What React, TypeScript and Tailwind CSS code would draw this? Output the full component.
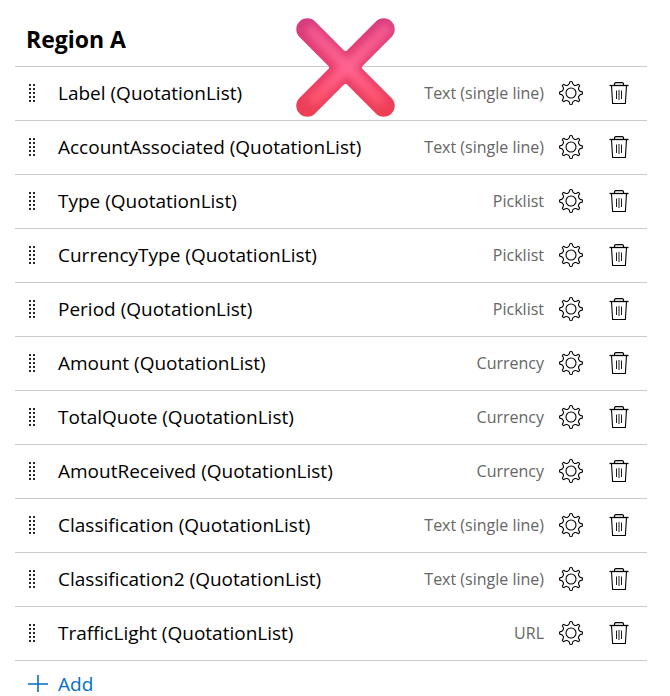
import React, { useState } from 'react';

interface Field {
  name: string;
  type: string;
}

const initialFields: Field[] = [
  { name: 'Label (QuotationList)', type: 'Text (single line)' },
  { name: 'AccountAssociated (QuotationList)', type: 'Text (single line)' },
  { name: 'Type (QuotationList)', type: 'Picklist' },
  { name: 'CurrencyType (QuotationList)', type: 'Picklist' },
  { name: 'Period (QuotationList)', type: 'Picklist' },
  { name: 'Amount (QuotationList)', type: 'Currency' },
  { name: 'TotalQuote (QuotationList)', type: 'Currency' },
  { name: 'AmoutReceived (QuotationList)', type: 'Currency' },
  { name: 'Classification (QuotationList)', type: 'Text (single line)' },
  { name: 'Classification2 (QuotationList)', type: 'Text (single line)' },
  { name: 'TrafficLight (QuotationList)', type: 'URL' },
];

// Eight rounded teeth around (12, 12)
const gearPath = (() => {
  const at = (radius: number, degrees: number) => {
    const a = (degrees * Math.PI) / 180;
    return `${(12 + radius * Math.sin(a)).toFixed(2)} ${(12 - radius * Math.cos(a)).toFixed(2)}`;
  };
  let d = `M${at(11.2, -6)}`;
  for (let i = 0; i < 8; i++) {
    const t = i * 45;
    d += `Q${at(11.8, t)} ${at(11.2, t + 6)}C${at(7.9, t + 9)} ${at(7.9, t + 36)} ${at(11.2, t + 39)}`;
  }
  return d + 'Z';
})();

function GearIcon() {
  return (
    <svg viewBox="0 0 24 24" className="size-6" fill="none" stroke="currentColor" strokeWidth="1.1" strokeLinejoin="round" aria-hidden="true">
      <path d={gearPath} />
      <circle cx="12" cy="12" r="5" />
    </svg>
  );
}

function TrashIcon() {
  return (
    <svg viewBox="0 0 24 24" className="size-6" fill="none" stroke="currentColor" aria-hidden="true">
      <path d="M2.500 4.500h19" strokeWidth="1.3" />
      <path d="M7.500 4.200V3q0-1.400 1.400-1.400h6.200q1.400 0 1.400 1.400v1.200" strokeWidth="1.2" />
      <path d="M4.500 4.500L5.600 22.500H18.400L19.500 4.500" strokeWidth="1.1" strokeLinejoin="round" />
      <path d="M9.500 9.500V18M12 9v10M14.500 9.500V18" strokeWidth="0.9" />
    </svg>
  );
}

function DragHandle() {
  return (
    <svg viewBox="0 0 6 18" className="h-[18px] w-1.5" fill="currentColor" aria-hidden="true">
      {[0, 4, 8, 12, 16].map(y => (
        <React.Fragment key={y}>
          <rect x="0" y={y} width="2" height="2" rx="0.8" />
          <rect x="4" y={y} width="2" height="2" rx="0.8" />
        </React.Fragment>
      ))}
    </svg>
  );
}

function CrossMark() {
  return (
    <svg
      viewBox="0 0 100 100"
      className="absolute left-[281px] top-[18px] size-[100px] pointer-events-none"
      role="img"
      aria-label="Incorrect"
    >
      <defs>
        <linearGradient id="cross-base" x1="0" y1="0" x2="0" y2="100" gradientUnits="userSpaceOnUse">
          <stop offset="0" stopColor="#d63c80" />
          <stop offset="0.5" stopColor="#ea3f70" />
          <stop offset="1" stopColor="#ee3f52" />
        </linearGradient>
        <linearGradient id="cross-glow" x1="0" y1="0" x2="0" y2="100" gradientUnits="userSpaceOnUse">
          <stop offset="0" stopColor="#f0558c" />
          <stop offset="0.5" stopColor="#ff6590" />
          <stop offset="0.8" stopColor="#ff5472" />
          <stop offset="1" stopColor="#f0485c" />
        </linearGradient>
        <filter id="cross-soft" x="-20%" y="-20%" width="140%" height="140%">
          <feGaussianBlur stdDeviation="3.5" />
        </filter>
        <clipPath id="cross-shape">
          <path d="M3.500 3.500a11 11 0 0 1 15.600 0L48 32.400q1.500 1.500 3 0L79.900 3.500a11 11 0 0 1 15.600 15.600L66.600 48q-1.500 1.500 0 3l28.900 28.900a11 11 0 0 1-15.600 15.600L51 66.600q-1.500-1.500-3 0L19.100 95.500a11 11 0 0 1-15.600-15.600L32.400 51q1.500-1.500 0-3L3.500 19.100a11 11 0 0 1 0-15.600Z" />
        </clipPath>
      </defs>
      <g clipPath="url(#cross-shape)">
        <rect width="100" height="100" fill="url(#cross-base)" />
        <path d="M16 13l67 69M90 11L18 82" stroke="url(#cross-glow)" strokeWidth="11" strokeLinecap="round" filter="url(#cross-soft)" />
      </g>
    </svg>
  );
}

export default function App() {
  const [fields, setFields] = useState<Field[]>(initialFields);

  const handleRemove = (index: number) => {
    setFields(prev => prev.filter((_, i) => i !== index));
  };

  const handleAdd = () => {
    setFields(prev => [...prev, { name: 'NewField (QuotationList)', type: 'Text (single line)' }]);
  };

  return (
    <main className="bg-white pl-[15px] pr-[23px] font-['Open_Sans',sans-serif] text-black">
      <section className="relative">
        <h2 className="px-[11px] pt-6 pb-3 text-[23px] leading-[30px] font-bold">Region A</h2>
        <ul>
          {fields.map((field, index) => (
            <li key={`${field.name}-${index}`} className="flex h-[54px] items-center border-t border-[#cccccc] pb-px pl-3.5 pr-4">
              <button type="button" aria-label={`Move ${field.name}`} className="mr-[23px] cursor-grab">
                <DragHandle />
              </button>
              <span className="flex-1 text-[19px] leading-7">{field.name}</span>
              <span className="text-base text-[#666666]">{field.type}</span>
              <button type="button" aria-label={`Configure ${field.name}`} className="ml-[15px] cursor-pointer">
                <GearIcon />
              </button>
              <button
                type="button"
                aria-label={`Delete ${field.name}`}
                onClick={() => handleRemove(index)}
                className="ml-6 cursor-pointer"
              >
                <TrashIcon />
              </button>
            </li>
          ))}
        </ul>
        <div className="border-t border-[#cccccc] px-[13px] pt-[9px]">
          <button type="button" onClick={handleAdd} className="flex cursor-pointer items-center gap-2.5 text-[19px] leading-7 text-[#056dc0]">
            <svg viewBox="0 0 20 20" className="size-5" fill="none" stroke="currentColor" strokeWidth="1.6" aria-hidden="true">
              <path d="M0 10h20M10 1v17" />
            </svg>
            Add
          </button>
        </div>
        <CrossMark />
      </section>
    </main>
  );
}
